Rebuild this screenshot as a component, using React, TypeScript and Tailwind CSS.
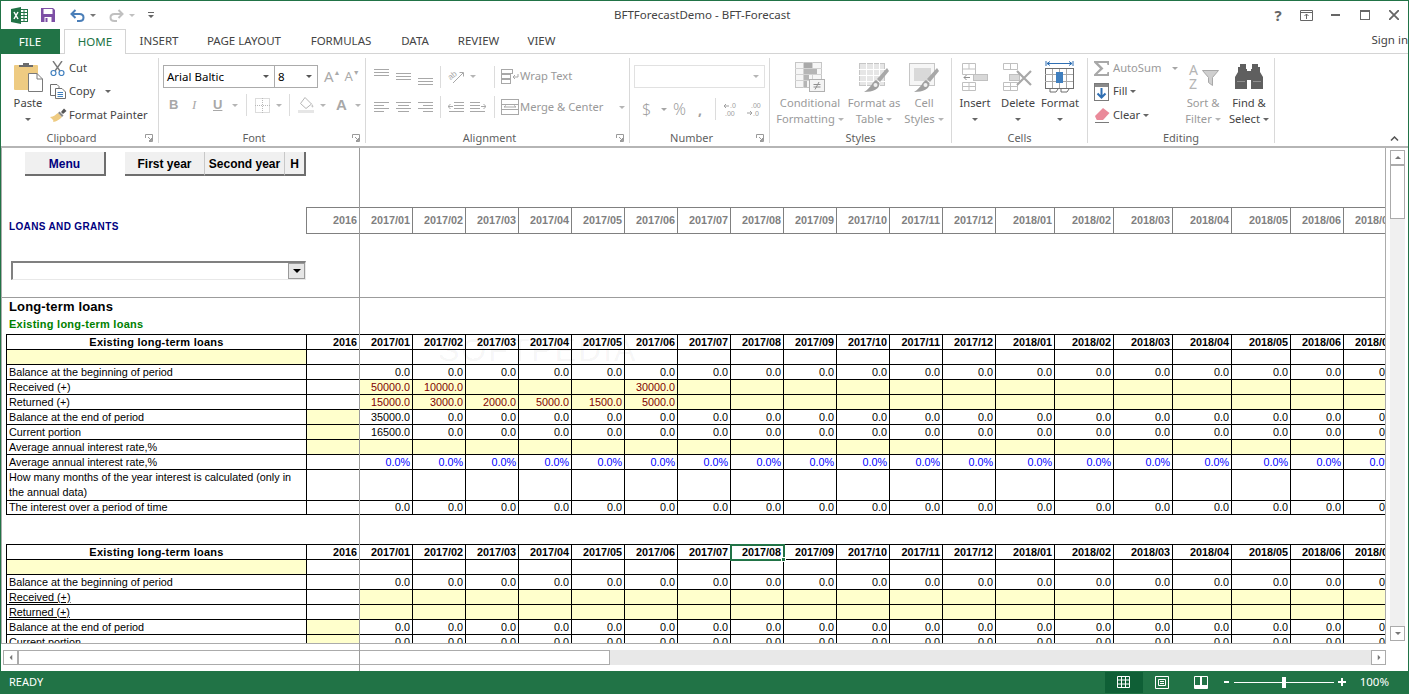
import type { ReactNode } from "react";

const ui = "font-['Noto_Sans',sans-serif]";
const gridCols =
  "grid grid-cols-[300px_repeat(13,53px)_repeat(5,59px)_repeat(2,53px)]";

const columns = [
  "2016",
  "2017/01",
  "2017/02",
  "2017/03",
  "2017/04",
  "2017/05",
  "2017/06",
  "2017/07",
  "2017/08",
  "2017/09",
  "2017/10",
  "2017/11",
  "2017/12",
  "2018/01",
  "2018/02",
  "2018/03",
  "2018/04",
  "2018/05",
  "2018/06",
  "2018/07",
];

type Row = {
  label?: string;
  labelYellow?: boolean;
  underline?: boolean;
  tall?: boolean;
  yellow?: "2016" | "months" | "all";
  fill?: string;
  first?: string[];
  tone?: "red" | "blue";
};

const firstTable: Row[] = [
  { labelYellow: true },
  { label: "Balance at the beginning of period", fill: "0.0" },
  {
    label: "Received (+)",
    yellow: "months",
    tone: "red",
    first: ["50000.0", "10000.0", "", "", "", "30000.0"],
  },
  {
    label: "Returned (+)",
    yellow: "months",
    tone: "red",
    first: ["15000.0", "3000.0", "2000.0", "5000.0", "1500.0", "5000.0"],
  },
  {
    label: "Balance at the end of period",
    yellow: "2016",
    fill: "0.0",
    first: ["35000.0"],
  },
  {
    label: "Current portion",
    yellow: "2016",
    fill: "0.0",
    first: ["16500.0"],
  },
  { label: "Average annual interest rate,%", yellow: "all" },
  { label: "Average annual interest rate,%", fill: "0.0%", tone: "blue" },
  {
    label:
      "How many months of the year interest is calculated (only in the annual data)",
    tall: true,
  },
  { label: "The interest over a period of time", fill: "0.0" },
];

const secondTable: Row[] = [
  { labelYellow: true },
  { label: "Balance at the beginning of period", fill: "0.0" },
  { label: "Received (+)", underline: true, yellow: "months" },
  { label: "Returned (+)", underline: true, yellow: "months" },
  { label: "Balance at the end of period", yellow: "2016", fill: "0.0" },
  { label: "Current portion", yellow: "2016", fill: "0.0" },
];

function Caret({ className = "fill-[#8c8c8c]" }: { className?: string }) {
  return (
    <svg width="6" height="3" viewBox="0 0 6 3" className={className}>
      <path d="M0 0H6L3 3Z" />
    </svg>
  );
}

function Launcher() {
  return (
    <svg
      width="8"
      height="8"
      viewBox="0 0 8 8"
      className="absolute right-[5px] bottom-[1px] fill-none stroke-[#9a9a9a]"
    >
      <path d="M.5 4V.5H7.5V7.5H4M3 3L6.5 6.5M6.5 4V6.5H4" />
    </svg>
  );
}

function Group({
  label,
  width,
  launcher,
  children,
}: {
  label: string;
  width: string;
  launcher?: boolean;
  children: ReactNode;
}) {
  return (
    <div className={`${width} relative flex h-[85px] flex-col border-r border-[#d9d9d9]`}>
      <div className="min-h-0 flex-1">{children}</div>
      <div
        className={`-mb-[3px] h-[17px] text-center text-[11px] leading-[17px] text-[#5f5f5f] ${
          launcher ? "pr-[16px]" : ""
        }`}
      >
        {label}
      </div>
      {launcher && <Launcher />}
    </div>
  );
}

function BigButton({
  width,
  icon,
  top,
  bottom,
  muted,
}: {
  width: string;
  icon: ReactNode;
  top: string;
  bottom?: string;
  muted?: boolean;
}) {
  return (
    <div
      className={`${width} flex flex-col items-center pt-[4px] leading-[16px] whitespace-nowrap ${
        muted ? "text-[#9a9a9a]" : "text-[#444444]"
      }`}
    >
      <div className="mb-[3px] flex h-[30px] items-center justify-center">{icon}</div>
      <div>{top}</div>
      <div className="flex h-[16px] items-center gap-[3px]">
        {bottom}
        <Caret className={muted ? "fill-[#b5b5b5]" : "fill-[#666666]"} />
      </div>
    </div>
  );
}

function SmallSep({ className = "" }: { className?: string }) {
  return <div className={`h-[22px] w-px bg-[#dcdcdc] ${className}`} />;
}

function ThreeLines() {
  return (
    <svg width="15" height="7" viewBox="0 0 15 7" className="stroke-[#a8a8a8]">
      <path d="M0 .5H15M0 3.5H15M0 6.5H15" />
    </svg>
  );
}

function AlignLeft() {
  return (
    <svg width="15" height="10" viewBox="0 0 15 10" className="stroke-[#a8a8a8]">
      <path d="M0 .5H15M0 3.5H10M0 6.5H15M0 9.5H10" />
    </svg>
  );
}

function AlignRight() {
  return (
    <svg width="15" height="10" viewBox="0 0 15 10" className="stroke-[#a8a8a8]">
      <path d="M0 .5H15M5 3.5H15M0 6.5H15M5 9.5H15" />
    </svg>
  );
}

function AlignCenter() {
  return (
    <svg width="15" height="10" viewBox="0 0 15 10" className="stroke-[#a8a8a8]">
      <path d="M0 .5H15M2 3.5H13M0 6.5H15M2 9.5H13" />
    </svg>
  );
}

function IndentIcon({ flip }: { flip?: boolean }) {
  return (
    <svg
      width="16"
      height="10"
      viewBox="0 0 16 10"
      fill="none"
      stroke="#a8a8a8"
      className={flip ? "scale-x-[-1]" : ""}
    >
      <path d="M6 .5H16M6 3.5H16M6 6.5H16M1 9.5H16" />
      <path d="M5 4.5H0M2.5 2L0 4.5L2.5 7" />
    </svg>
  );
}

function ExcelLogo() {
  return (
    <svg width="17" height="17" viewBox="0 0 17 17">
      <rect x="8" y="2.5" width="8.5" height="12" fill="#fff" stroke="#217346" />
      <path d="M10 5.5H16M10 8.5H16M10 11.5H16M13 3V14" stroke="#217346" />
      <path d="M0 2L10 0V17L0 15Z" fill="#217346" />
      <path d="M3 5L7 12M7 5L3 12" stroke="#fff" strokeWidth="1.5" />
    </svg>
  );
}

function SaveIcon() {
  return (
    <svg width="14" height="14" viewBox="0 0 14 14">
      <path d="M0 0H12L14 2V14H0Z" fill="#7d4fa5" />
      <rect x="2.5" y="1" width="9" height="5" fill="#fff" />
      <rect x="3.5" y="9" width="7" height="5" fill="#fff" />
      <rect x="4.5" y="10" width="2" height="4" fill="#7d4fa5" />
    </svg>
  );
}

function UndoIcon({ color }: { color: string }) {
  return (
    <svg width="15" height="13" viewBox="0 0 15 13" fill="none" stroke={color}>
      <path d="M2 5H9.5C12 5 13.5 6.5 13.5 8.5C13.5 10.5 12 12 9.5 12H7" strokeWidth="2" />
      <path d="M5.5 1L1.5 5L5.5 9" strokeWidth="2" />
    </svg>
  );
}

function PasteIcon() {
  return (
    <svg width="29" height="30" viewBox="0 0 29 30">
      <rect x="0" y="3" width="24" height="25" rx="1" fill="#eecb82" />
      <path d="M5 5V3H9V1H15V3H19V5Z" fill="#6b6b6b" />
      <path d="M14.5 11.5H23L28.5 17V29.5H14.5Z" fill="#fff" stroke="#7a7a7a" />
      <path d="M23 11.5V17H28.5" fill="none" stroke="#7a7a7a" />
    </svg>
  );
}

function CutIcon() {
  return (
    <svg width="15" height="15" viewBox="0 0 15 15" fill="none">
      <path d="M3 0L10 10M12 0L5 10" stroke="#7a7a7a" strokeWidth="1.4" />
      <circle cx="3.5" cy="12" r="2.5" stroke="#3f7fbf" strokeWidth="1.2" />
      <circle cx="11.5" cy="12" r="2.5" stroke="#3f7fbf" strokeWidth="1.2" />
    </svg>
  );
}

function CopyIcon() {
  return (
    <svg width="16" height="15" viewBox="0 0 16 15" fill="none" stroke="#6f6f6f">
      <path d="M.5 .5H7L9 2.5V11.5H.5Z" fill="#fff" />
      <path d="M5.5 4.5H12L15.5 8V14.5H5.5Z" fill="#fff" />
      <path d="M7.5 8.5H13M7.5 10.5H13M7.5 12.5H13" stroke="#3f7fbf" />
    </svg>
  );
}

function PainterIcon() {
  return (
    <svg width="17" height="15" viewBox="0 0 17 15">
      <path d="M0 9C4 9 6 6 8 5L12 9C10 11 6 14 3 14C4 12.5 3 12 0 9Z" fill="#eecb82" />
      <path d="M8 5L12 9L13.5 7.5L9.5 3.5Z" fill="#8a8a8a" />
      <path d="M11 4L14 0.5L16.5 3L13 6Z" fill="#555" />
    </svg>
  );
}

function BorderIcon() {
  return (
    <svg width="15" height="15" viewBox="0 0 15 15" fill="none" stroke="#b9b9b9" strokeDasharray="1 1">
      <rect x=".5" y=".5" width="14" height="14" />
      <path d="M7.5 0V15M0 7.5H15" />
    </svg>
  );
}

function FillIcon() {
  return (
    <svg width="17" height="16" viewBox="0 0 17 16">
      <path d="M7 .5L13.5 7L8 11.5L2.5 6.5Z" fill="#fff" stroke="#b5b5b5" />
      <path d="M14 7C15.5 9 16 10 14.5 10.5C13 10 13.5 9 14 7Z" fill="#c5c5c5" />
      <rect x="0" y="13" width="16" height="3" fill="#e6e6e6" />
    </svg>
  );
}

function OrientIcon() {
  return (
    <svg
      width="17"
      height="14"
      viewBox="0 0 17 14"
      fill="none"
      stroke="#a8a8a8"
      className="overflow-visible"
    >
      <text
        x="1"
        y="8"
        fontSize="8"
        fontFamily="Liberation Sans"
        fill="#a8a8a8"
        stroke="none"
        transform="rotate(-40 5 7)"
      >
        ab
      </text>
      <path d="M5 13L15 3M11.5 2.5H15.5V6.5" />
    </svg>
  );
}

function WrapIcon() {
  return (
    <svg width="18" height="15" viewBox="0 0 18 15" fill="none" stroke="#a8a8a8">
      <rect x=".5" y=".5" width="11" height="4" />
      <rect x=".5" y="5.5" width="9" height="4" />
      <rect x=".5" y="10.5" width="9" height="4" />
      <path d="M12 8H17V5M12 8L14 6M12 8L14 10" />
    </svg>
  );
}

function MergeIcon() {
  return (
    <svg width="18" height="16" viewBox="0 0 18 16" fill="none" stroke="#a8a8a8">
      <rect x=".5" y=".5" width="17" height="15" />
      <path d="M0 5.5H18M0 10.5H18M3 8H15M3 8L5 6.5M15 8L13 6.5" />
    </svg>
  );
}

function CondIcon() {
  return (
    <svg width="30" height="30" viewBox="0 0 30 30" fill="none">
      <rect x=".5" y=".5" width="26" height="25" fill="#f6f6f6" stroke="#c6c6c6" />
      <path d="M0 6.5H27M0 12.5H27M0 18.5H27M8.5 0V26M17.5 0V26" stroke="#d2d2d2" />
      <rect x="9" y="1" width="8" height="5" fill="#a9a9a9" />
      <rect x="9" y="7" width="13" height="5" fill="#b5b5b5" />
      <rect x="9" y="13" width="5" height="5" fill="#b5b5b5" />
      <rect x="9" y="19" width="3" height="6" fill="#b5b5b5" />
      <rect x="14.5" y="17.5" width="15" height="12" fill="#f4f4f4" stroke="#b0b0b0" />
      <path d="M18.5 22.5H25.5M18.5 25H25.5M24 20L20 27.5" stroke="#8f8f8f" />
    </svg>
  );
}

function TableIcon({ plain }: { plain?: boolean }) {
  return (
    <svg width="30" height="29" viewBox="0 0 30 29" fill="none">
      <rect x=".5" y=".5" width="25" height="22" fill={plain ? "#f6f6f6" : "#e6e6e6"} stroke="#c6c6c6" />
      {plain ? (
        <rect x="5" y="5" width="17" height="13" fill="#d9d9d9" />
      ) : (
        <path d="M0 6.5H26M0 12.5H26M0 18.5H26M7.5 0V23M14.5 0V23M20.5 0V23" stroke="#fff" />
      )}
      <path d="M30 8L21 19L18 16L28 5Z" fill="#a8a8a8" />
      <path d="M17 17C13 19 13 24 5 29C14 29 21 26 20.5 20Z" fill="#a0a0a0" />
      <circle cx="16.5" cy="22" r="2" fill="#f0f0f0" />
    </svg>
  );
}

function InsertIcon() {
  return (
    <svg width="26" height="28" viewBox="0 0 26 28" fill="none" stroke="#c0c0c0">
      <path d="M.5 .5H13.5V11.5H.5ZM.5 6H13.5M7 .5V6" />
      <rect x="11.5" y="11.5" width="14" height="6" fill="#d8d8d8" />
      <path d="M.5 19.5H13.5V27.5H.5ZM.5 23.5H13.5M7 19.5V27.5" />
      <path d="M2 14.5H8M2 14.5L4.5 12M2 14.5L4.5 17" stroke="#8f8f8f" />
    </svg>
  );
}

function DeleteIcon() {
  return (
    <svg width="30" height="28" viewBox="0 0 30 28" fill="none" stroke="#c0c0c0">
      <path d="M.5 .5H14.5V6.5H.5ZM7.5 .5V6.5" />
      <rect x="6.5" y="11.5" width="10" height="6" fill="#d8d8d8" />
      <path d="M.5 19.5H14.5V27.5H.5ZM.5 23.5H14.5M7.5 19.5V27.5" />
      <path d="M14 8L28 22M28 8L14 22" stroke="#a8a8a8" strokeWidth="2.2" />
    </svg>
  );
}

function FormatIcon() {
  return (
    <svg width="30" height="32" viewBox="0 0 30 32" fill="none">
      <path d="M1 0V5M28 0V5M2 2.5H27M2 2.5L5 .5M2 2.5L5 4.5M27 2.5L24 .5M27 2.5L24 4.5" stroke="#2f6fb3" />
      <rect x=".5" y="7.5" width="28" height="20" stroke="#6f6f6f" />
      <path d="M0 13.5H28M0 20.5H28M7.5 8V27M14.5 8V27M21.5 8V27" stroke="#a9a9a9" />
      <rect x="11" y="11" width="7" height="11" fill="#3f7fbf" />
      <path d="M5 28V31H11L13 28M16 28V31H22L24 28" stroke="#6f6f6f" />
    </svg>
  );
}

function SigmaIcon() {
  return (
    <svg width="16" height="15" viewBox="0 0 16 15" className="fill-[#a8a8a8]">
      <path d="M0 0H15V4H13.5L13 2H4L9.5 7.5L3.5 13H13L13.5 11H15V15H0V13.5L6 7.5L0 1.5Z" />
    </svg>
  );
}

function FillDownIcon() {
  return (
    <svg width="15" height="18" viewBox="0 0 15 18" fill="none">
      <rect x=".5" y=".5" width="14" height="17" fill="#fff" stroke="#7a7a7a" />
      <rect x="1" y="1" width="13" height="3" fill="#8a8a8a" />
      <path d="M7.5 5V14M3.5 10.5L7.5 14.5L11.5 10.5" stroke="#2f6fb3" strokeWidth="2" />
    </svg>
  );
}

function ClearIcon() {
  return (
    <svg width="16" height="15" viewBox="0 0 16 15">
      <path d="M9 0L15.5 5L9 12H3L1 8Z" fill="#ea8a9a" />
      <path d="M1 8L5 12H3Z" fill="#ea8a9a" />
      <path d="M1 14.5H15" stroke="#7a7a7a" />
    </svg>
  );
}

function SortIcon() {
  return (
    <div className="flex h-[30px] w-[32px] pl-[2px]">
      <div className="flex w-[13px] flex-col pt-px text-[14px] leading-[14px] text-[#b5b5b5]">
        <span>A</span>
        <span>Z</span>
      </div>
      <svg width="17" height="16" viewBox="0 0 17 16" className="mt-[8px]">
        <path d="M.5 .5H16.5L10.5 7.5V15.5L6.5 12.5V7.5Z" fill="#cfcfcf" stroke="#a8a8a8" />
      </svg>
    </div>
  );
}

function BinocularsIcon() {
  return (
    <svg width="28" height="26" viewBox="0 0 28 26" className="fill-[#5f5f5f]">
      <path d="M5 0H11V5H12V25H0V13L3 8V3H5Z" />
      <path d="M17 0H23V3H25V8L28 13V25H16V5H17Z" />
      <rect x="12" y="7" width="4" height="9" />
      <path d="M2 17H10V18H2ZM18 17H26V18H18Z" fill="#fff" opacity=".3" />
    </svg>
  );
}

function Decimal({ flip }: { flip?: boolean }) {
  return (
    <svg width="14" height="15" viewBox="0 0 14 15" className="fill-[#a0a0a0] text-[7px]">
      <text x={flip ? 4 : 6} y="6" fontFamily="Liberation Sans">
        {flip ? ".00" : ".0"}
      </text>
      <text x={flip ? 6 : 1} y="14" fontFamily="Liberation Sans">
        {flip ? ".0" : ".00"}
      </text>
      <path
        d={flip ? "M0 11H5M3 9L5 11L3 13" : "M0 4H5M2 2L0 4L2 6"}
        fill="none"
        stroke="#a0a0a0"
      />
    </svg>
  );
}

function SmallAction({
  icon,
  text,
  muted,
  caretGap,
}: {
  icon: ReactNode;
  text: string;
  muted?: boolean;
  caretGap?: string;
}) {
  return (
    <div className="flex h-[23.5px] items-center">
      <div className="flex w-[19px] items-center justify-start">{icon}</div>
      <span className={muted ? "text-[#9a9a9a]" : "text-[#444444]"}>{text}</span>
      {caretGap && (
        <span className={`${caretGap} flex`}>
          <Caret className={muted ? "fill-[#a5a5a5]" : "fill-[#666666]"} />
        </span>
      )}
    </div>
  );
}

function Ribbon() {
  return (
    <div
      className={`${ui} flex h-[94px] border-b-2 border-[#b5b5b5] pt-[4px] text-[11.2px]`}
    >
      <Group label="Clipboard" width="w-[158px]" launcher>
        <div className="flex">
          <BigButton width="w-[30px] ml-[12px] mr-[7px]" icon={<PasteIcon />} top="Paste" />
          <div className="-mt-[1.5px]">
            <SmallAction icon={<CutIcon />} text="Cut" />
            <SmallAction icon={<CopyIcon />} text="Copy" caretGap="ml-[10px]" />
            <SmallAction icon={<PainterIcon />} text="Format Painter" />
          </div>
        </div>
      </Group>

      <Group label="Font" width="w-[207px]" launcher>
        <div className="flex items-center pt-[7px] pl-[4px] text-[11.5px]">
          <div className="flex h-[23px] w-[112px] items-center justify-between border border-[#ababab] pr-[5px] pl-[3px] text-black">
            <span>Arial Baltic</span>
            <Caret className="fill-[#555555]" />
          </div>
          <div className="-ml-px flex h-[23px] w-[44px] items-center justify-between border border-[#ababab] pr-[5px] pl-[3px] text-black">
            <span>8</span>
            <Caret className="fill-[#555555]" />
          </div>
          <span className="ml-[6px] text-[15px] text-[#aaaaaa]">A</span>
          <span className="mb-[7px] text-[7px] text-[#aaaaaa]">▲</span>
          <span className="ml-[4px] text-[13px] text-[#aaaaaa]">A</span>
          <span className="mb-[7px] text-[7px] text-[#aaaaaa]">▼</span>
        </div>
        <div className="mt-[6px] flex h-[22px] items-center pl-[10px] text-[#a8a8a8]">
          <span className="w-[9px] font-['Liberation_Sans',sans-serif] text-[13px] font-bold">B</span>
          <span className="ml-[14px] w-[8px] font-['Liberation_Serif',serif] text-[13px] italic">I</span>
          <span className="ml-[13px] w-[9px] font-['Liberation_Sans',sans-serif] text-[13px] font-bold underline">U</span>
          <span className="ml-[10px] flex"><Caret className="fill-[#b5b5b5]" /></span>
          <SmallSep className="ml-[8px]" />
          <span className="ml-[8px] flex"><BorderIcon /></span>
          <span className="ml-[6px] flex"><Caret className="fill-[#b5b5b5]" /></span>
          <SmallSep className="ml-[7px]" />
          <span className="ml-[8px] flex"><FillIcon /></span>
          <span className="ml-[5px] flex"><Caret className="fill-[#b5b5b5]" /></span>
          <span className="ml-[10px] w-[11px] font-['Liberation_Sans',sans-serif] text-[15px] font-bold">A</span>
          <span className="ml-[8px] flex"><Caret className="fill-[#b5b5b5]" /></span>
        </div>
      </Group>

      <Group label="Alignment" width="w-[264px]" launcher>
        <div className="flex h-[30px] items-center pt-[7px] pl-[8px] text-[#999999]">
          <span className="mb-[8px] flex w-[22px]"><ThreeLines /></span>
          <span className="flex w-[22px]"><ThreeLines /></span>
          <span className="mt-[10px] flex w-[22px]"><ThreeLines /></span>
          <SmallSep className="mr-[7px]" />
          <OrientIcon />
          <span className="ml-[5px] flex"><Caret className="fill-[#b5b5b5]" /></span>
          <SmallSep className="ml-[18px] mr-[6px]" />
          <WrapIcon />
          <span className="ml-px">Wrap Text</span>
        </div>
        <div className="mt-[4px] flex h-[30px] items-center pl-[8px] text-[#999999]">
          <span className="flex w-[22px]"><AlignLeft /></span>
          <span className="flex w-[22px]"><AlignCenter /></span>
          <span className="flex w-[22px]"><AlignRight /></span>
          <SmallSep className="mr-[7px]" />
          <span className="flex w-[22px]"><IndentIcon /></span>
          <span className="flex w-[22px]"><IndentIcon flip /></span>
          <SmallSep className="ml-[2px] mr-[6px]" />
          <MergeIcon />
          <span className="ml-px w-[99px] whitespace-nowrap">Merge &amp; Center</span>
          <Caret className="fill-[#b5b5b5]" />
        </div>
      </Group>

      <Group label="Number" width="w-[140px]" launcher>
        <div className="px-[4px] pt-[7px]">
          <div className="flex h-[23px] w-[131px] items-center justify-end border border-[#e1e1e1] pr-[5px]">
            <Caret className="fill-[#b5b5b5]" />
          </div>
        </div>
        <div className="mt-[6px] flex h-[30px] items-center pl-[12px] text-[#a0a0a0]">
          <span className="w-[15px] text-[16px] font-light">$</span>
          <span className="ml-[4px] flex"><Caret className="fill-[#a5a5a5]" /></span>
          <span className="ml-[6px] w-[16px] text-[16px] font-light">%</span>
          <span className="ml-[9px] w-[10px] text-[14px] font-bold">,</span>
          <SmallSep className="ml-[7px] mr-[8px]" />
          <Decimal />
          <span className="ml-[9px] flex"><Decimal flip /></span>
        </div>
      </Group>

      <Group label="Styles" width="w-[182px]">
        <div className="flex pl-[6px]">
          <BigButton muted width="w-[68px]" icon={<CondIcon />} top="Conditional" bottom="Formatting" />
          <BigButton muted width="w-[52px] ml-[4px]" icon={<TableIcon />} top="Format as" bottom="Table" />
          <BigButton muted width="w-[38px] ml-[5px]" icon={<TableIcon plain />} top="Cell" bottom="Styles" />
        </div>
      </Group>

      <Group label="Cells" width="w-[136px]">
        <div className="flex pl-[6px]">
          <BigButton width="w-[34px]" icon={<InsertIcon />} top="Insert" />
          <BigButton width="w-[34px] ml-[9px]" icon={<DeleteIcon />} top="Delete" />
          <BigButton width="w-[40px] ml-[5px]" icon={<FormatIcon />} top="Format" />
        </div>
      </Group>

      <Group label="Editing" width="w-[187px]">
        <div className="flex pl-[6px]">
          <div className="-mt-[1.5px] w-[91px]">
            <SmallAction muted icon={<SigmaIcon />} text="AutoSum" caretGap="ml-[11px]" />
            <SmallAction icon={<FillDownIcon />} text="Fill" caretGap="ml-[3px]" />
            <SmallAction icon={<ClearIcon />} text="Clear" caretGap="ml-[3px]" />
          </div>
          <BigButton muted width="w-[36px]" icon={<SortIcon />} top="Sort &" bottom="Filter" />
          <BigButton width="w-[42px] ml-[7px]" icon={<BinocularsIcon />} top="Find &" bottom="Select" />
        </div>
      </Group>

      <div className="flex flex-1 items-end justify-end pr-[9px] pb-[5px]">
        <svg width="9" height="5" viewBox="0 0 9 5" fill="none" stroke="#555555" strokeWidth="1.5">
          <path d="M1 4.5L4.5 1L8 4.5" />
        </svg>
      </div>
    </div>
  );
}

function TitleBar() {
  return (
    <div className={`${ui} flex h-[28px] items-center text-[11.5px] text-[#444444]`}>
      <div className="ml-[10px] flex items-center">
        <ExcelLogo />
        <span className="ml-[13px] flex"><SaveIcon /></span>
        <span className="ml-[15px] flex"><UndoIcon color="#4a7eb8" /></span>
        <span className="ml-[5px] flex"><Caret className="fill-[#777777]" /></span>
        <span className="ml-[13px] flex scale-x-[-1]"><UndoIcon color="#c0c0c0" /></span>
        <span className="ml-[5px] flex"><Caret className="fill-[#c0c0c0]" /></span>
        <svg width="6" height="6" viewBox="0 0 6 6" className="ml-[13px] fill-[#666666]">
          <path d="M0 0H6V1H0ZM0 3H6L3 6Z" />
        </svg>
      </div>
      <div className="ml-[460px] w-[176px] text-center whitespace-nowrap">
        BFTForecastDemo - BFT-Forecast
      </div>
      <div className="ml-auto flex items-center pr-[9px]">
        <span className="w-[14px] text-center text-[15px] font-bold text-[#666666]">?</span>
        <svg width="13" height="11" viewBox="0 0 13 11" fill="none" stroke="#666666" className="ml-[15px]">
          <path d="M.5 .5H12.5V10.5H.5ZM.5 2.5H12.5M6.5 9V4M4.5 6L6.5 4L8.5 6" />
        </svg>
        <div className="ml-[18px] h-[2px] w-[9px] bg-[#666666]" />
        <div className="ml-[20px] h-[10px] w-[10px] border border-t-2 border-[#666666]" />
        <svg width="10" height="10" viewBox="0 0 10 10" stroke="#666666" strokeWidth="1.8" className="ml-[19px]">
          <path d="M0 0L10 10M10 0L0 10" />
        </svg>
      </div>
    </div>
  );
}

function Tabs() {
  const tabs = [
    { label: "INSERT", width: "w-[66px]" },
    { label: "PAGE LAYOUT", width: "w-[104px]" },
    { label: "FORMULAS", width: "w-[90px]" },
    { label: "DATA", width: "w-[58px]" },
    { label: "REVIEW", width: "w-[69px]" },
    { label: "VIEW", width: "w-[57px]" },
  ];
  return (
    <div
      className={`${ui} flex h-[25px] items-stretch border-b border-[#d4d4d4] text-[11.5px] text-[#444444]`}
    >
      <div className="-ml-px flex h-[25px] w-[60px] items-center justify-center bg-[#217346] text-white">
        FILE
      </div>
      <div className="ml-[4px] flex h-[25px] w-[62px] items-center justify-center border-x border-t border-[#d4d4d4] bg-white text-[#217346]">
        HOME
      </div>
      {tabs.map((t) => (
        <div key={t.label} className={`${t.width} flex items-center justify-center`}>
          {t.label}
        </div>
      ))}
      <div className="ml-auto flex items-center pb-[3px]">Sign in</div>
    </div>
  );
}

function ActionButton({
  label,
  width,
  navy,
  joined,
}: {
  label: string;
  width: string;
  navy?: boolean;
  joined?: boolean;
}) {
  return (
    <div
      className={`${width} flex h-[24px] items-center justify-center border-b-2 border-b-[#6e6e6e] bg-[#f0f0f0] pt-px text-[12px] font-bold ${
        joined ? "border-r border-r-[#c8c8c8]" : "border-r-2 border-r-[#6e6e6e]"
      } ${navy ? "text-[#000080]" : "text-black"}`}
    >
      {label}
    </div>
  );
}

function TableRow({ row }: { row: Row }) {
  return (
    <div className={`${gridCols} ${row.tall ? "h-[30px]" : "h-[15px]"}`}>
      <div
        className={`border-r border-b border-black pl-[2px] text-[10.8px] ${
          row.tall ? "leading-[15px]" : "leading-[14px]"
        } ${row.labelYellow ? "bg-[#ffffcc]" : ""} ${row.underline ? "underline" : ""}`}
      >
        {row.label}
      </div>
      {columns.map((col, i) => {
        const month = i > 0;
        const isYellow =
          row.yellow === "all" ||
          (row.yellow === "2016" && i === 0) ||
          (row.yellow === "months" && month);
        const value = month ? (row.first?.[i - 1] ?? row.fill ?? "") : "";
        const tone =
          row.tone === "red"
            ? "text-[#800000]"
            : row.tone === "blue"
              ? "text-[#0000ff]"
              : "text-black";
        return (
          <div
            key={col}
            className={`${tone} border-r border-b border-black pr-[2px] text-right text-[10.8px] leading-[14px] ${
              isYellow ? "bg-[#ffffcc]" : ""
            }`}
          >
            {value}
          </div>
        );
      })}
    </div>
  );
}

function DataTable({ rows, selected }: { rows: Row[]; selected?: string }) {
  return (
    <div className="w-max border-t border-l border-black">
      <div className={`${gridCols} h-[15px]`}>
        <div className="border-r border-b border-black text-center text-[11px] leading-[14px] font-bold tracking-[0.25px]">
          Existing long-term loans
        </div>
        {columns.map((col) => (
          <div
            key={col}
            className="relative border-r border-b border-black pr-[2px] text-right text-[10.8px] leading-[14px] font-bold"
          >
            {col}
            {selected === col && (
              <div className="absolute -top-px -right-[2px] -bottom-[2px] -left-px z-10 border-2 border-[#217346]">
                <div className="absolute -right-[3px] -bottom-[3px] h-[5px] w-[5px] border border-white bg-[#217346]" />
              </div>
            )}
          </div>
        ))}
      </div>
      {rows.map((row, i) => (
        <TableRow key={i} row={row} />
      ))}
    </div>
  );
}

function Sheet() {
  return (
    <div className="relative h-[496px] w-[1385px] overflow-hidden border-r border-b border-l border-[#ababab] bg-white font-['Liberation_Sans',sans-serif] text-black">
      <div className="h-[150px] border-b border-[#9c9c9c]">
        <div className="flex h-[59px] pt-[4px] pl-[23px]">
          <ActionButton label="Menu" width="w-[81px]" navy />
          <div className="ml-[19px] flex">
            <ActionButton label="First year" width="w-[80px]" joined />
            <ActionButton label="Second year" width="w-[80px]" joined />
            <ActionButton label="H" width="w-[21px]" />
          </div>
        </div>
        <div className="pl-[5px]">
          <div className={`${gridCols} h-[27px] w-max`}>
            <div className="border-r border-[#808080] pt-[13px] pl-[2px] text-[10px] leading-[13px] font-bold tracking-[0.35px] text-[#000080]">
              LOANS AND GRANTS
            </div>
            {columns.map((col) => (
              <div
                key={col}
                className="border-t border-r border-b border-[#808080] pt-[5px] pr-[2px] text-right text-[10.8px] leading-[15px] font-bold text-[#808080]"
              >
                {col}
              </div>
            ))}
          </div>
        </div>
        <div className="mt-[27px] ml-[9px] flex h-[19px] w-[295px] items-center justify-end border-t-2 border-r border-b border-l-2 border-t-[#808080] border-r-[#e8e8e8] border-b-[#e8e8e8] border-l-[#808080]">
          <div className="flex h-[16px] w-[17px] items-center justify-center border border-[#9a9a9a] bg-[#e6e6e6]">
            <svg width="8" height="4" viewBox="0 0 8 4" className="fill-black">
              <path d="M0 0H8L4 4Z" />
            </svg>
          </div>
        </div>
      </div>
      <div className="h-[36px] pl-[7px]">
        <div className="h-[18px] text-[13px] leading-[18px] font-bold tracking-[0.15px]">
          Long-term loans
        </div>
        <div className="text-[11px] leading-[16px] font-bold tracking-[0.25px] text-[#008000]">
          Existing long-term loans
        </div>
      </div>
      <div className="pl-[4px]">
        <DataTable rows={firstTable} />
        <div className="h-[29px]" />
        <DataTable rows={secondTable} selected="2017/08" />
      </div>
      <div className="pointer-events-none absolute top-[186px] left-[436px] text-[32px] leading-[32px] tracking-[2px] text-black/5">
        SOFTPEDIA
      </div>
    </div>
  );
}

function VerticalScroll() {
  return (
    <div className="flex h-[496px] w-[22px] flex-col pt-[2px] pl-[4px]">
      <div className="flex h-[15px] w-[15px] items-center justify-center border border-[#ababab]">
        <Caret className="rotate-180 fill-[#777777]" />
      </div>
      <div className="flex w-[15px] flex-1 flex-col bg-[#f0f0f0]">
        <div className="h-[54px] border border-[#ababab] bg-white" />
      </div>
      <div className="mb-[3px] flex h-[15px] w-[15px] items-center justify-center border border-[#ababab]">
        <Caret className="fill-[#777777]" />
      </div>
    </div>
  );
}

function HorizontalScroll() {
  return (
    <div className="flex h-[27px] pt-[6px] pl-[2px]">
      <div className="flex h-[15px] w-[15px] items-center justify-center border border-[#ababab] bg-white">
        <Caret className="rotate-90 fill-[#777777]" />
      </div>
      <div className="flex h-[15px] w-[1353px] bg-[#e8e8e8]">
        <div className="h-[15px] w-[592px] border border-[#ababab] bg-white" />
      </div>
      <div className="flex h-[15px] w-[15px] items-center justify-center border border-[#ababab] bg-white">
        <Caret className="-rotate-90 fill-[#777777]" />
      </div>
    </div>
  );
}

function StatusBar() {
  return (
    <div
      className={`${ui} flex h-[23px] items-center bg-[#217346] pb-px text-[11px] text-white`}
    >
      <span className="ml-[8px]">READY</span>
      <div className="ml-auto flex items-center pr-[19px]">
        <div className="flex h-[21px] w-[38px] items-center justify-center bg-[#0f5f36]">
          <svg width="13" height="12" viewBox="0 0 13 12" fill="none" stroke="#fff">
            <path d="M.5 .5H12.5V11.5H.5ZM.5 4H12.5M.5 8H12.5M4.5 .5V11.5M8.5 .5V11.5" />
          </svg>
        </div>
        <svg width="14" height="13" viewBox="0 0 14 13" fill="none" stroke="#fff" className="ml-[12px]">
          <path d="M.5 .5H13.5V12.5H.5ZM3.5 3.5H10.5V9.5H3.5ZM5 5.5H9M5 7.5H9" />
        </svg>
        <svg width="14" height="13" viewBox="0 0 14 13" className="ml-[25px]">
          <path d="M.5 .5H13.5V12.5H.5Z" fill="#217346" stroke="#fff" />
          <path d="M1 9H6V1H8V9H13V12H1Z" fill="#fff" />
        </svg>
        <div className="ml-[16px] h-[2px] w-[5px] bg-white" />
        <div className="relative ml-[5px] h-px w-[100px] bg-white">
          <div className="absolute top-[-5px] left-[48px] h-[11px] w-[4px] bg-white" />
        </div>
        <svg width="8" height="8" viewBox="0 0 8 8" stroke="#fff" strokeWidth="2" className="ml-[4px]">
          <path d="M0 4H8M4 0V8" />
        </svg>
        <span className="ml-[14px] text-[11.5px]">100%</span>
      </div>
    </div>
  );
}

export default function App() {
  return (
    <div className="h-[694px] w-[1409px] overflow-hidden border-x border-t border-[#217346] bg-white">
      <TitleBar />
      <Tabs />
      <Ribbon />
      <div className="relative">
        <div className="flex">
          <Sheet />
          <VerticalScroll />
        </div>
        <HorizontalScroll />
        <div className="absolute top-0 bottom-0 left-[358px] w-px bg-[#9c9c9c]" />
      </div>
      <StatusBar />
    </div>
  );
}
